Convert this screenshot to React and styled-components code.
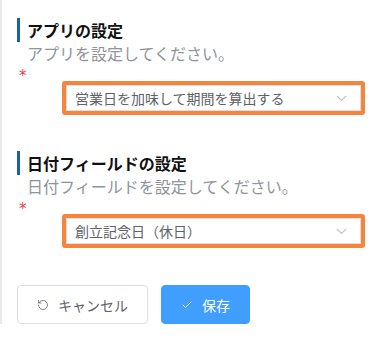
import React from "react";
import styled, { createGlobalStyle } from "styled-components";
import { RotateCcw, Check } from "lucide-react";

const GlobalStyle = createGlobalStyle`
  body {
    margin: 0;
    background: #fff;
    font-family: "Noto Sans CJK JP", "Noto Sans", sans-serif;
  }
`;

const Page = styled.div`
  width: 383px;
  box-sizing: border-box;
  border-left: 2px solid #e9eaec;
  padding: 18px 0 0 15px;
`;

const Section = styled.section`
  & + & {
    margin-top: 36px;
  }
`;

const Title = styled.h3`
  margin: 0;
  border-left: 3px solid #17649f;
  padding-left: 7px;
  font-size: 16px;
  font-weight: 700;
  line-height: 24px;
  color: #111;
`;

const Desc = styled.p`
  margin: 0;
  padding-left: 10px;
  font-size: 16px;
  line-height: 22px;
  color: #8f949c;
`;

const Required = styled.div`
  height: 17px;
  padding-left: 2px;
  font-family: "DejaVu Sans", sans-serif;
  font-size: 15px;
  line-height: 24px;
  color: #e8414b;
`;

const Highlight = styled.div`
  margin-left: 45px;
  width: 303px;
  height: 34px;
  box-sizing: border-box;
  border: 4px solid #f5843c;
  border-radius: 3px;
`;

const Select = styled.div`
  height: 100%;
  box-sizing: border-box;
  border: 1px solid #dcdfe6;
  display: flex;
  align-items: center;
  justify-content: space-between;
  padding: 0 13px 0 8px;
  font-size: 14px;
  color: #606266;
`;

const Chevron = () => (
  <svg width="11" height="7" viewBox="0 0 11 7">
    <path d="M1 1 L5.5 5.5 L10 1" fill="none" stroke="#c0c4cc" strokeWidth="1.2" />
  </svg>
);

const Actions = styled.div`
  display: flex;
  gap: 13px;
  margin-top: 37px;
`;

const Button = styled.button`
  width: ${(p) => p.$width}px;
  height: 39px;
  box-sizing: border-box;
  display: flex;
  align-items: center;
  justify-content: center;
  gap: 9px;
  padding: 0;
  border-radius: 4px;
  font-family: inherit;
  font-size: 14px;
  cursor: pointer;
  border: 1px solid ${(p) => (p.$primary ? "#409eff" : "#dcdfe6")};
  background: ${(p) => (p.$primary ? "#409eff" : "#fff")};
  color: ${(p) => (p.$primary ? "#fff" : "#606266")};
`;

const Field = ({ title, desc, value }) => (
  <Section>
    <Title>{title}</Title>
    <Desc>{desc}</Desc>
    <Required>*</Required>
    <Highlight>
      <Select>
        <span>{value}</span>
        <Chevron />
      </Select>
    </Highlight>
  </Section>
);

export default function App() {
  return (
    <>
      <GlobalStyle />
      <Page>
        <Field
          title="アプリの設定"
          desc="アプリを設定してください。"
          value="営業日を加味して期間を算出する"
        />
        <Field
          title="日付フィールドの設定"
          desc="日付フィールドを設定してください。"
          value="創立記念日（休日）"
        />
        <Actions>
          <Button $width={131}>
            <RotateCcw size={12} strokeWidth={1.6} />
            キャンセル
          </Button>
          <Button $primary $width={89}>
            <Check size={12} strokeWidth={1.6} />
            保存
          </Button>
        </Actions>
      </Page>
    </>
  );
}
